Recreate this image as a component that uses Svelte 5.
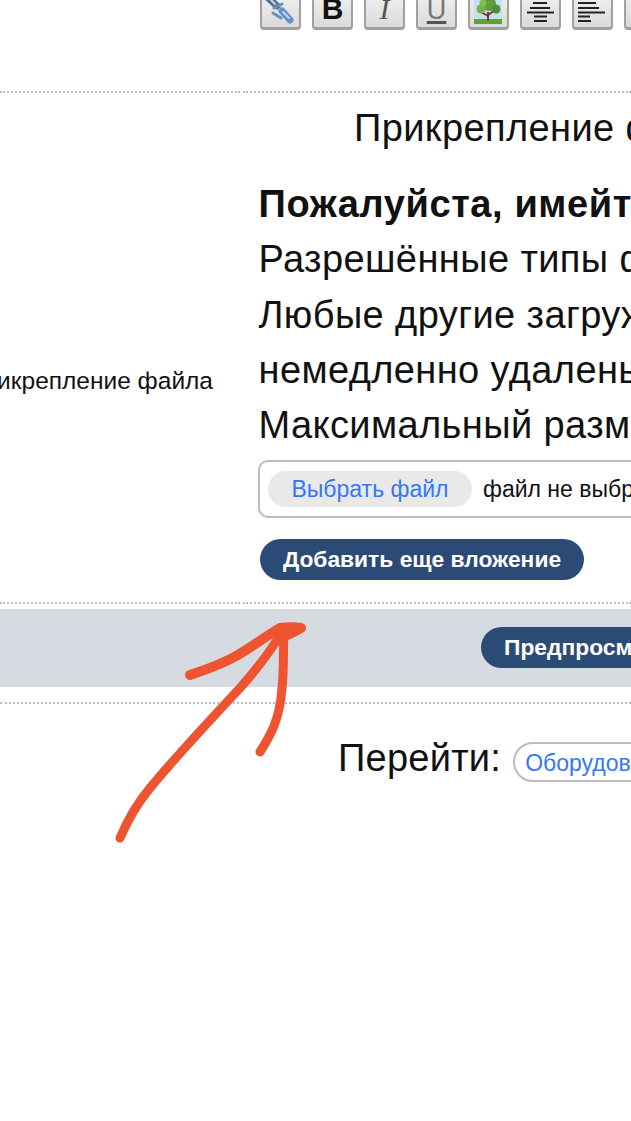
<script>
  const rules = [
    { text: 'Разрешённые типы файлов: jpg, png, gif' },
    { text: 'Любые другие загруженные файлы будут' },
    { text: 'немедленно удалены с сервера' },
    { text: 'Максимальный размер файла 2 МБ' }
  ];
</script>

<div class="page">
  <div class="toolbar">
    <button class="tool" aria-label="link">
      <svg class="icon" viewBox="0 0 41 30" width="41" height="30">
        <g fill="none" stroke-linecap="round">
          <path d="M6 -4 L17 6" stroke="#54718f" stroke-width="7" />
          <path d="M22 11 L30 20" stroke="#5d93c8" stroke-width="7" />
          <path d="M14 8 L22 4 M13 13 L21 18" stroke="#6c8fb2" stroke-width="3" />
          <path d="M8 -3 L15 4 M23 12 L29 18" stroke="#c6d4e2" stroke-width="2" />
        </g>
      </svg>
    </button>
    <button class="tool glyph bold">B</button>
    <button class="tool glyph ital">I</button>
    <button class="tool glyph under"><span>U</span></button>
    <button class="tool" aria-label="image">
      <svg class="icon" viewBox="0 0 41 30" width="41" height="30">
        <rect x="6" y="-2" width="28" height="26" fill="#c4e0f2" />
        <rect x="6" y="19" width="28" height="5" fill="#5aa62e" />
        <path d="M20 21 L20 12 M20 15 L27 10 M20 16 L13 12" stroke="#7c3a24" stroke-width="2" fill="none" />
        <circle cx="21" cy="4" r="7" fill="#5f9e3c" />
        <circle cx="13" cy="9" r="4.5" fill="#76b04a" />
        <circle cx="28" cy="9" r="4.5" fill="#4f8e32" />
        <circle cx="15" cy="3" r="3.5" fill="#86bc58" />
      </svg>
    </button>
    <button class="tool" aria-label="center">
      <svg class="icon" viewBox="0 0 41 30" width="41" height="30">
        <path d="M13 3 H27 M10 8 H30 M7 12.5 H34 M14 16.5 H27 M14 21 H27" stroke="#222" stroke-width="2" />
      </svg>
    </button>
    <button class="tool" aria-label="left">
      <svg class="icon" viewBox="0 0 41 30" width="41" height="30">
        <path d="M6 3 H24 M6 8 H27 M6 12.5 H33 M6 16.5 H18 M6 21 H19" stroke="#222" stroke-width="2" />
      </svg>
    </button>
    <button class="tool" aria-label="right"></button>
  </div>

  <div class="form">
    <div class="cell title-spacer"></div>
    <div class="cell title">Прикрепление файлов</div>

    <div class="cell label"><span>Прикрепление файла</span></div>
    <div class="cell body">
      <p class="strong">Пожалуйста, имейте в виду</p>
      {#each rules as rule}
        <p>{rule.text}</p>
      {/each}
      <div class="file">
        <span class="pick">Выбрать файл</span>
        <span class="none">файл не выбран</span>
      </div>
      <button class="pill add">Добавить еще вложение</button>
    </div>
  </div>

  <div class="band">
    <button class="pill preview">Предпросмотр</button>
  </div>

  <div class="jump">
    <span class="jump-label">Перейти:</span>
    <span class="select">Оборудование и материалы</span>
  </div>

  <svg class="scribble" viewBox="0 0 631 1121" width="631" height="1121" aria-hidden="true">
    <g fill="none" stroke="#ee5430" stroke-linecap="round" stroke-linejoin="round">
      <path stroke-width="9" d="M120 838 C126 824 135 806 150 788 C178 754 212 718 240 688 C256 670 270 652 282 632" />
      <path stroke-width="10" d="M190 675 C205 670 222 664 236 656 C252 647 266 636 280 628 C288 627 295 627 301 628 C296 631 290 634 283 637" />
      <path stroke-width="9" d="M284 632 C283 652 284 672 282 688 C281 702 278 716 274 726 C270 736 265 744 260 752" />
    </g>
  </svg>
</div>

<style>
  :global(body) {
    margin: 0;
    background: #fff;
  }

  .page {
    position: relative;
    width: 631px;
    height: 1121px;
    overflow: hidden;
    background: #fff;
    color: #111;
    font-family: "Liberation Sans", Arial, sans-serif;
  }

  .toolbar {
    display: flex;
    align-items: flex-end;
    gap: 11px;
    height: 30px;
    padding-left: 260px;
    margin-bottom: 61px;
    overflow: hidden;
  }

  .tool {
    flex: none;
    position: relative;
    box-sizing: border-box;
    width: 41px;
    height: 44px;
    padding: 0;
    display: flex;
    align-items: flex-end;
    justify-content: center;
    border: 2px solid #a0a0a0;
    border-bottom-width: 3px;
    border-radius: 4px;
    background: linear-gradient(#f4f4f4, #dadada);
    overflow: hidden;
    font-family: "Liberation Sans", sans-serif;
    color: #222;
  }

  .icon {
    flex: none;
    margin: 0 -2px -3px;
    filter: blur(0.5px);
  }

  .glyph {
    font-size: 30px;
    line-height: 30px;
    padding-bottom: 3px;
  }

  .bold { font-weight: 700; color: #111; }
  .ital { font-style: italic; font-family: "Liberation Serif", serif; color: #555; }
  .under { color: #777; font-size: 27px; padding-bottom: 2px; }
  .under span {
    text-decoration: underline;
    text-decoration-thickness: 3px;
    text-underline-offset: 2px;
    text-decoration-color: #555;
  }

  .form {
    display: grid;
    grid-template-columns: 243px 388px;
  }

  .cell {
    min-width: 0;
  }

  .title-spacer,
  .title {
    border-top: 2px dotted #bdbdbd;
  }

  .title-spacer { margin-right: 3px; }

  .title {
    height: 66px;
    padding: 12px 0 0 111px;
    box-sizing: border-box;
    font-size: 38px;
    letter-spacing: 0.4px;
    line-height: 46px;
    white-space: nowrap;
  }

  .label {
    display: flex;
    align-items: center;
    justify-content: flex-end;
    margin-right: 3px;
    padding-top: 2px;
    padding-right: 27px;
    font-size: 24.5px;
    white-space: nowrap;
    border-bottom: 2px dotted #bdbdbd;
  }

  .label span { flex: none; }

  .body {
    padding: 20px 0 22px 15.5px;
    border-bottom: 2px dotted #bdbdbd;
    white-space: nowrap;
    overflow: hidden;
  }

  p {
    margin: 0;
    font-size: 38px;
    letter-spacing: 0.4px;
    line-height: 55.25px;
  }

  .strong { font-weight: 700; letter-spacing: 0.6px; }

  .file {
    display: flex;
    align-items: center;
    gap: 11px;
    box-sizing: border-box;
    width: 500px;
    height: 58px;
    margin-top: 7px;
    margin-left: -0.5px;
    padding-left: 8px;
    border: 2px solid #bcbcbc;
    border-radius: 10px;
    font-size: 23px;
  }

  .pick {
    display: block;
    width: 204px;
    height: 36px;
    line-height: 37px;
    text-align: center;
    border-radius: 18px;
    background: #e9e9e9;
    color: #3478f6;
    font-size: 23px;
  }

  .none { color: #111; }

  .pill {
    border: 0;
    padding: 0;
    height: 41px;
    border-radius: 21px;
    background: #2c4a76;
    color: #fff;
    font-family: "Liberation Sans", Arial, sans-serif;
    font-size: 22.8px;
    font-weight: 700;
    white-space: nowrap;
  }

  .add {
    display: block;
    width: 324px;
    margin: 21px 0 0 1.5px;
  }

  .band {
    display: flex;
    height: 78px;
    margin-top: 5px;
    padding: 18px 0 0 481px;
    box-sizing: border-box;
    background: #d5dbe1;
    white-space: nowrap;
    overflow: hidden;
  }

  .preview {
    flex: none;
    width: 220px;
    padding-left: 23px;
    text-align: left;
  }

  .jump {
    display: flex;
    align-items: flex-start;
    height: 116px;
    margin-top: 15px;
    padding-top: 38px;
    padding-left: 338px;
    box-sizing: border-box;
    border-top: 2px dotted #bdbdbd;
    white-space: nowrap;
  }

  .jump-label {
    flex: none;
    font-size: 38px;
    letter-spacing: 0.25px;
    line-height: 40px;
    margin-top: -4px;
    margin-right: 12px;
  }

  .select {
    flex: none;
    box-sizing: border-box;
    width: 320px;
    height: 40px;
    padding-left: 10px;
    line-height: 38px;
    border: 2px solid #bcbcbc;
    border-radius: 20px;
    color: #3478f6;
    font-size: 23px;
  }

  .scribble {
    position: absolute;
    inset: 0;
    pointer-events: none;
  }
</style>
